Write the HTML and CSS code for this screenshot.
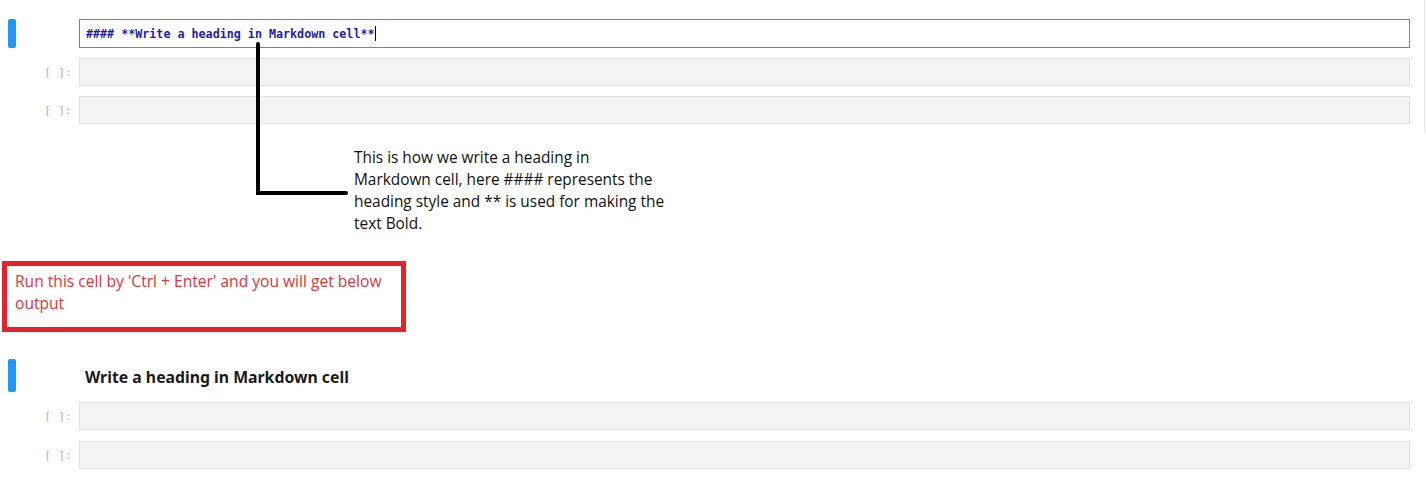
FILE: index.html
```html
<!DOCTYPE html>
<html>
<head>
<meta charset="utf-8">
<link rel="stylesheet" href="styles.css">
</head>
<body>
<div class="page">
  <div class="top">
    <div class="cell cell-edit">
      <div class="prompt"><span class="bar"></span></div>
      <div class="editor"><span class="code">#### **Write a heading in Markdown cell**</span><span class="caret"></span></div>
    </div>
    <div class="cell">
      <div class="prompt"><span class="num">[ ]:</span></div>
      <div class="input"></div>
    </div>
    <div class="cell">
      <div class="prompt"><span class="num">[ ]:</span></div>
      <div class="input"></div>
    </div>
  </div>

  <p class="note">This is how we write a heading in<br>Markdown cell, here #### represents the<br>heading style and ** is used for making the<br>text Bold.</p>

  <div class="callout">Run this cell by 'Ctrl + Enter' and you will get below<br>output</div>

  <div class="bottom">
    <div class="cell cell-md">
      <div class="prompt"><span class="bar"></span></div>
      <div class="rendered"><h4 class="heading">Write a heading in Markdown cell</h4></div>
    </div>
    <div class="cell">
      <div class="prompt"><span class="num">[ ]:</span></div>
      <div class="input"></div>
    </div>
    <div class="cell cell-last">
      <div class="prompt"><span class="num">[ ]:</span></div>
      <div class="input"></div>
    </div>
  </div>

  <svg class="pointer" width="1426" height="496" viewBox="0 0 1426 496">
    <path d="M258 44 V193 H346" fill="none" stroke="#000" stroke-width="4" stroke-linecap="round" stroke-linejoin="miter"/>
  </svg>
</div>
</body>
</html>
```
FILE: styles.css
```css
html, body {
  margin: 0;
  padding: 0;
  background: #ffffff;
}
.page {
  position: relative;
  width: 1426px;
  height: 496px;
  overflow: hidden;
}
.top {
  box-sizing: border-box;
  width: 1425px;
  height: 133px;
  padding-top: 19px;
  border-right: 1px solid #e6e6e6;
  display: flex;
  flex-direction: column;
  gap: 10px;
}
.cell {
  display: flex;
  height: 28px;
}
.cell-edit {
  height: 29px;
}
.prompt {
  box-sizing: border-box;
  width: 79px;
  display: flex;
  align-items: center;
  justify-content: space-between;
  padding: 0 7px 0 8px;
}
.bar {
  display: block;
  width: 8px;
  height: 100%;
  background: #2196f3;
  border-radius: 2px;
}
.num {
  margin-left: auto;
  font-family: "DejaVu Sans Mono", "Liberation Mono", monospace;
  font-size: 11px;
  color: #b0b0b0;
  letter-spacing: 0.3px;
}
.editor {
  box-sizing: border-box;
  width: 1331px;
  height: 100%;
  border: 1px solid #2f9be2;
  background: #ffffff;
  display: flex;
  align-items: center;
  padding-left: 6px;
}
.code {
  font-family: "DejaVu Sans Mono", "Liberation Mono", monospace;
  font-weight: bold;
  font-size: 11.7px;
  color: #1c1cb4;
  white-space: pre;
}
.caret {
  display: inline-block;
  width: 1px;
  height: 15px;
  background: #000;
}
.input {
  box-sizing: border-box;
  width: 1331px;
  height: 100%;
  background: #f4f4f4;
  border: 1px solid #e0e0e0;
}
.note {
  margin: 14px 0 0 354px;
  font-family: "Open Sans", Lato, sans-serif;
  font-size: 15.4px;
  line-height: 22px;
  color: #111111;
}
.callout {
  box-sizing: border-box;
  width: 404px;
  height: 71px;
  margin: 26px 0 0 2px;
  border: 5px solid #e8202a;
  padding: 4px 8px 0 8px;
  font-family: "Open Sans", Lato, sans-serif;
  font-size: 15.6px;
  line-height: 22px;
  color: #e03438;
}
.bottom {
  margin-top: 27px;
  display: flex;
  flex-direction: column;
  gap: 10px;
}
.cell-md {
  height: 33px;
}
.cell-last {
  margin-top: 1px;
}
.rendered {
  width: 1331px;
  display: flex;
  align-items: center;
  padding: 3px 0 0 6px;
  box-sizing: border-box;
}
.heading {
  margin: 0;
  font-family: "Noto Sans", "Open Sans", sans-serif;
  font-weight: 700;
  font-size: 15.8px;
  color: #1a1a1a;
}
.pointer {
  position: absolute;
  left: 0;
  top: 0;
  pointer-events: none;
}
```
